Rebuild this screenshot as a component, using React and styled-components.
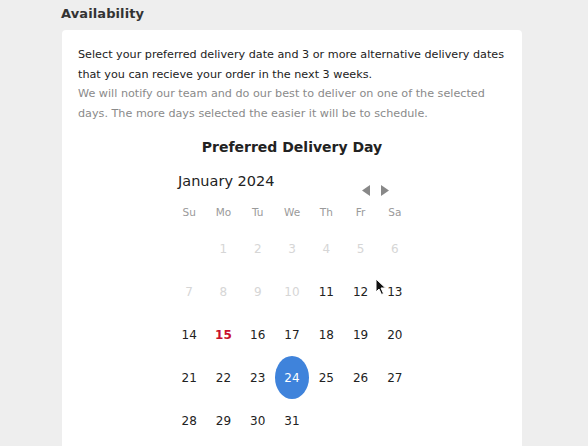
import React from 'react'
import styled, { createGlobalStyle } from 'styled-components'

const Global = createGlobalStyle`
  html, body { margin: 0; padding: 0; background: #eeeeee; }
  body { font-family: "DejaVu Sans", "Open Sans", sans-serif; color: #222; }
`

const Page = styled.div`
  width: 588px;
  height: 446px;
  overflow: hidden;
  position: relative;
  box-sizing: border-box;
  padding: 6px 66px 0 61px;
`

const Title = styled.h2`
  margin: 0 0 8px 0;
  font-size: 13px;
  font-weight: 800;
  color: #333;
  letter-spacing: 0.1px;
  line-height: 16px;
`

const Card = styled.div`
  margin-left: 1px;
  background: #fff;
  border-radius: 4px;
  padding: 15px 16px 0 16px;
  height: 430px;
`

const Para = styled.p`
  margin: 0;
  font-size: 11.2px;
  line-height: 19.5px;
  color: ${p => (p.$muted ? '#8a8a8a' : '#222')};
`

const Heading = styled.h3`
  margin: 14px 0 0 0;
  text-align: center;
  font-size: 14px;
  font-weight: 700;
  color: #222;
  line-height: 20px;
`

const Calendar = styled.div`
  width: 240px;
  margin: 12px auto 0 auto;
`

const MonthRow = styled.div`
  display: flex;
  justify-content: space-between;
  padding: 0 23px 0 6px;
  height: 24px;
`

const Month = styled.div`
  font-size: 14.5px;
  color: #222;
  line-height: 24px;
`

const Arrows = styled.div`
  display: flex;
  gap: 9px;
  align-items: flex-end;
  margin-bottom: -3px;
`

const Grid = styled.div`
  display: grid;
  grid-template-columns: repeat(7, 1fr);
  margin-top: 8px;
`

const Dow = styled.div`
  text-align: center;
  font-size: 10.5px;
  color: #9a9a9a;
  height: 26px;
  line-height: 22px;
`

const Day = styled.div`
  height: 43px;
  display: flex;
  align-items: center;
  justify-content: center;
  font-size: 12px;
  border-radius: 50%;
  color: ${p => (p.$disabled ? '#d6d6d6' : p.$today ? '#c8102e' : p.$selected ? '#fff' : '#222')};
  font-weight: ${p => (p.$today ? 700 : 400)};
  background: ${p => (p.$selected ? '#3f83db' : 'transparent')};
`

const Cursor = styled.svg`
  position: absolute;
  left: 375px;
  top: 278px;
`

const Arrow = ({ dir }) => (
  <svg width="9" height="11" viewBox="0 0 9 11">
    {dir === 'left'
      ? <polygon points="8,0 8,11 0,5.5" fill="#888" />
      : <polygon points="1,0 1,11 9,5.5" fill="#888" />}
  </svg>
)

const dows = ['Su', 'Mo', 'Tu', 'We', 'Th', 'Fr', 'Sa']

export default function App() {
  const cells = [null]
  for (let d = 1; d <= 31; d++) cells.push(d)
  return (
    <Page>
      <Global />
      <Title>Availability</Title>
      <Card>
        <Para>Select your preferred delivery date and 3 or more alternative delivery dates that you can recieve your order in the next 3 weeks.</Para>
        <Para $muted>We will notify our team and do our best to deliver on one of the selected days. The more days selected the easier it will be to schedule.</Para>
        <Heading>Preferred Delivery Day</Heading>
        <Calendar>
          <MonthRow>
            <Month>January 2024</Month>
            <Arrows>
              <Arrow dir="left" />
              <Arrow dir="right" />
            </Arrows>
          </MonthRow>
          <Grid>
            {dows.map(d => <Dow key={d}>{d}</Dow>)}
            {cells.map((d, i) => (
              <Day
                key={i}
                $disabled={d !== null && d <= 10}
                $today={d === 15}
                $selected={d === 24}
              >
                {d}
              </Day>
            ))}
          </Grid>
        </Calendar>
      </Card>
      <Cursor width="12" height="18" viewBox="0 0 12 18">
        <path d="M1 1 L1 14 L4 11 L6.5 16.5 L8.5 15.5 L6 10 L10.5 10 Z" fill="#111" stroke="#fff" strokeWidth="1" />
      </Cursor>
    </Page>
  )
}
